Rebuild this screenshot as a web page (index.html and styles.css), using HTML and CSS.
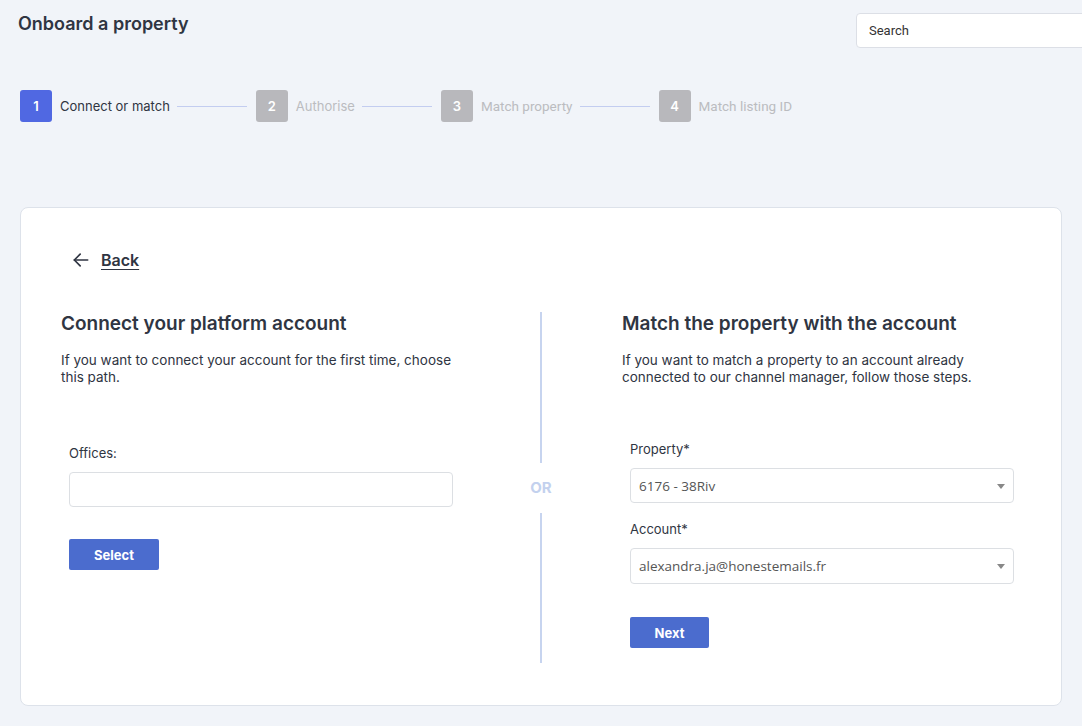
FILE: index.html
```html
<!DOCTYPE html>
<html lang="en">
<head>
  <meta charset="UTF-8" />
  <meta name="viewport" content="width=device-width, initial-scale=1" />
  <title>Onboard a property</title>
  <link rel="stylesheet" href="styles.css">
</head>
<body>

  <header class="top-bar">
    <h1>Onboard a property</h1>
    <input class="search" type="text" placeholder="Search" />
  </header>

  <!-- Etapes -->
  <ol class="stepper">
    <li class="step active"><span class="num">1</span><span class="label">Connect or match</span></li>
    <li class="sep"></li>
    <li class="step"><span class="num">2</span><span class="label">Authorise</span></li>
    <li class="sep"></li>
    <li class="step"><span class="num">3</span><span class="label alt">Match property</span></li>
    <li class="sep"></li>
    <li class="step"><span class="num">4</span><span class="label alt">Match listing ID</span></li>
  </ol>

  <section class="card">
    <a class="back" href="#">
      <svg width="20" height="20" viewBox="0 0 24 24" fill="none" stroke="currentColor" stroke-width="2" stroke-linecap="round" stroke-linejoin="round"><path d="M20 12H4"/><path d="M11 5l-7 7 7 7"/></svg>
      <span>Back</span>
    </a>

    <div class="paths">
      <div class="path">
        <h2>Connect your platform account</h2>
        <p>If you want to connect your account for the first time, choose this path.</p>
        <div class="form offices">
          <label>Offices:</label>
          <input type="text" class="field" />
          <button class="btn">Select</button>
        </div>
      </div>

      <div class="divider">
        <span class="line"></span>
        <span class="or">OR</span>
        <span class="line"></span>
      </div>

      <div class="path right">
        <h2>Match the property with the account</h2>
        <p>If you want to match a property to an account already connected to our channel manager, follow those steps.</p>
        <div class="form">
          <label>Property*</label>
          <div class="field select">6176 - 38Riv</div>
          <label class="second">Account*</label>
          <div class="field select">alexandra.ja@honestemails.fr</div>
          <button class="btn next">Next</button>
        </div>
      </div>
    </div>
  </section>

</body>
</html>
```

FILE: styles.css
```css
html, body {
  overflow: hidden;
}
body {
  margin: 0;
  background: #f1f4f9;
  font-family: Inter, "Noto Sans", sans-serif;
  color: #2f3542;
}

/* En-tete */
.top-bar {
  display: flex;
  justify-content: space-between;
  align-items: flex-start;
  padding: 13px 0 0 18px;
  height: 48px;
}
.top-bar h1 {
  margin: 0;
  font-size: 18px;
  font-weight: 600;
  line-height: 21px;
  color: #2f3542;
}
.search {
  width: 240px;
  height: 35px;
  box-sizing: border-box;
  margin-right: -14px;
  margin-left: -1px;
  border: 1px solid #dcdfe6;
  border-radius: 4px;
  background: #fff;
  padding: 0 12px;
  font-family: Roboto, sans-serif;
  font-size: 13px;
  color: #333;
}
.search::placeholder {
  color: #333;
}

/* Etapes */
.stepper {
  list-style: none;
  display: flex;
  align-items: center;
  margin: 29px 0 0 20px;
  padding: 0;
}
.step {
  display: flex;
  align-items: center;
  gap: 8px;
}
.num {
  width: 32px;
  height: 32px;
  border-radius: 3px;
  background: #b8b8bc;
  color: #fff;
  font-size: 13px;
  font-weight: 600;
  display: flex;
  align-items: center;
  justify-content: center;
}
.label {
  font-size: 13px;
  color: #bbbcc0;
}
.label.alt {
  font-family: Roboto, sans-serif;
  font-size: 13.5px;
}
.step.active .num {
  background: #5068e2;
}
.step.active .label {
  color: #2f3542;
}
.sep {
  width: 70px;
  height: 1px;
  background: #c3cdf0;
  margin: 0 9px 0 7px;
}

/* Carte */
.card {
  margin: 85px 20px 0;
  background: #fff;
  border: 1px solid #dde2ea;
  border-radius: 8px;
  padding: 42px 40px 42px 40px;
}
.back {
  display: inline-flex;
  align-items: center;
  gap: 10px;
  margin-left: 10px;
  color: #2f3542;
  font-size: 16px;
  font-weight: 600;
  text-decoration: none;
}
.back span {
  text-decoration: underline;
  text-underline-offset: 3px;
}

.paths {
  display: flex;
  margin-top: 38px;
}
.path {
  width: 420px;
  flex-shrink: 0;
}
.path.right {
  flex: 1;
  width: auto;
  min-width: 0;
  padding-bottom: 15px;
}
.path h2 {
  margin: 0;
  font-size: 19px;
  font-weight: 600;
  line-height: 24px;
  color: #2f3542;
}
.path p {
  margin: 16px 0 0;
  font-size: 13.5px;
  line-height: 17px;
  color: #2f3542;
  max-width: 400px;
}

.divider {
  display: flex;
  flex-direction: column;
  align-items: center;
  flex-shrink: 0;
  width: 40px;
  margin: 0 61px 0 40px;
}
.divider .line {
  flex: 1;
  width: 2px;
  background: #c7d4ef;
}
.divider .or {
  padding: 16px 0;
  font-size: 15px;
  line-height: 18px;
  font-weight: 700;
  color: #c3d1ee;
}

.form {
  margin-left: 8px;
  width: 384px;
  display: flex;
  flex-direction: column;
  align-items: flex-start;
}
.offices {
  margin-top: 59px;
}
.right .form {
  margin-top: 55px;
}
.form label {
  font-size: 13px;
  line-height: 17px;
  color: #2f3542;
  margin-bottom: 10px;
}
.form label.second {
  margin-top: 18px;
}
.field {
  width: 100%;
  height: 35px;
  box-sizing: border-box;
  border: 1px solid #dcdfe3;
  border-radius: 4px;
  background: #fff;
}
.select {
  position: relative;
  display: flex;
  align-items: center;
  padding: 0 12px 0 8px;
  font-family: "Open Sans", sans-serif;
  font-size: 13.5px;
  color: #555;
}
.select + label.second + .select {
  height: 36px;
}
.select::after {
  content: "";
  position: absolute;
  right: 8px;
  top: 15px;
  border-left: 4px solid transparent;
  border-right: 4px solid transparent;
  border-top: 5px solid #888;
}
.btn {
  margin-top: 32px;
  width: 90px;
  height: 31px;
  border: none;
  border-radius: 2px;
  background: #4b6cce;
  color: #fff;
  font-family: Inter, sans-serif;
  font-size: 13px;
  font-weight: 700;
  cursor: pointer;
}
.btn.next {
  width: 79px;
  margin-top: 33px;
}
```
